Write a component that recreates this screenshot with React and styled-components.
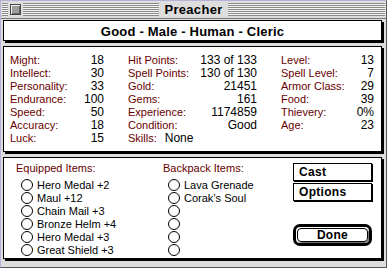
import React from 'react'
import styled, {createGlobalStyle} from 'styled-components'

const stats = [
    [
        ['Might:', '18'],
        ['Intellect:', '30'],
        ['Personality:', '33'],
        ['Endurance:', '100'],
        ['Speed:', '50'],
        ['Accuracy:', '18'],
        ['Luck:', '15'],
    ],
    [
        ['Hit Points:', '133 of 133'],
        ['Spell Points:', '130 of 130'],
        ['Gold:', '21451'],
        ['Gems:', '161'],
        ['Experience:', '1174859'],
        ['Condition:', 'Good'],
    ],
    [
        ['Level:', '13'],
        ['Spell Level:', '7'],
        ['Armor Class:', '29'],
        ['Food:', '39'],
        ['Thievery:', '0%'],
        ['Age:', '23'],
    ],
]

const equipped = ['Hero Medal +2', 'Maul +12', 'Chain Mail +3', 'Bronze Helm +4', 'Hero Medal +3', 'Great Shield +3']
const backpack = ['Lava Grenade', 'Corak\u2019s Soul', '', '', '', '']

const App = ()=>{
    return (
        <>
            <Global />
            <Window>
                <TitleBar>
                    <TitleSide>
                        <Stripes $w="6px" />
                        <CloseBox />
                        <Stripes />
                    </TitleSide>
                    <Title>Preacher</Title>
                    <TitleSide>
                        <Stripes />
                    </TitleSide>
                </TitleBar>
                <Content>
                    <HeaderPanel>Good - Male - Human - Cleric</HeaderPanel>
                    <StatsPanel>
                        {stats.map((col, i) => (
                            <StatColumn key={i}>
                                {col.map(([label, value]) => (
                                    <StatRow key={label}>
                                        <Label>{label}</Label>
                                        <Value>{value}</Value>
                                    </StatRow>
                                ))}
                                {i === 1 && (
                                    <SkillsRow>
                                        <Label>Skills:</Label>
                                        <Value>None</Value>
                                    </SkillsRow>
                                )}
                            </StatColumn>
                        ))}
                    </StatsPanel>
                    <ItemsPanel>
                        <ItemColumn>
                            <Label>Equipped Items:</Label>
                            <ItemList>
                                {equipped.map((it, i) => (
                                    <Item key={i}><Radio />{it}</Item>
                                ))}
                            </ItemList>
                        </ItemColumn>
                        <ItemColumn>
                            <Label>Backpack Items:</Label>
                            <ItemList>
                                {backpack.map((it, i) => (
                                    <Item key={i}><Radio />{it}</Item>
                                ))}
                            </ItemList>
                        </ItemColumn>
                        <Buttons>
                            <Button>Cast</Button>
                            <Button>Options</Button>
                            <DefaultRing>
                                <DoneButton>Done</DoneButton>
                            </DefaultRing>
                        </Buttons>
                    </ItemsPanel>
                </Content>
            </Window>
        </>
    )
}

const Global = createGlobalStyle`
    body {
        margin: 0;
        background: #dddddd;
        font-family: "Liberation Sans", Arial, sans-serif;
    }
`

const Window = styled.div`
    width: 387px;
    height: 268px;
    box-sizing: border-box;
    background: #dddddd;
    border: 1px solid #555;
    border-top-color: #b4b4d8;
    border-left-color: #b4b4d8;
    display: flex;
    flex-direction: column;
`

const TitleBar = styled.div`
    height: 17px;
    border-bottom: 1px solid #777;
    display: grid;
    grid-template-columns: 1fr auto 1fr;
    align-items: center;
    padding: 0 1px 0 1px;
`

const TitleSide = styled.div`
    display: flex;
    align-items: center;
    gap: 2px;
`

const Stripes = styled.div`
    flex: ${p => p.$w ? 'none' : '1'};
    width: ${p => p.$w || 'auto'};
    height: 13px;
    background: repeating-linear-gradient(to bottom, #8a8a8a 0 1px, #f4f4f4 1px 2px);
`

const CloseBox = styled.div`
    width: 11px;
    height: 11px;
    box-sizing: border-box;
    border: 1px solid #444;
    background: #9c9c9c;
    box-shadow: inset 1px 1px 0 #eee, inset -1px -1px 0 #666;
`

const Title = styled.div`
    padding: 0 5px;
    font-weight: bold;
    font-size: 13px;
    letter-spacing: 0.3px;
    color: #000;
`

const Content = styled.div`
    padding: 1px 0 0 2px;
    display: flex;
    flex-direction: column;
    gap: 5px;
`

const Panel = styled.div`
    width: 379px;
    box-sizing: border-box;
    background: #fff;
    border: 1px solid #000;
    box-shadow: 2px 2px 0 #000;
`

const HeaderPanel = styled(Panel)`
    height: 21px;
    padding-top: 2px;
    line-height: 17px;
    text-align: center;
    font-weight: bold;
    font-size: 13px;
    letter-spacing: 0.2px;
`

const StatsPanel = styled(Panel)`
    height: 106px;
    margin-top: 0;
    padding: 7px 0 0 6px;
    display: grid;
    grid-template-columns: 94px 129px 93px;
    column-gap: 24px;
    align-items: start;
`

const StatColumn = styled.div`
    display: flex;
    flex-direction: column;
`

const StatRow = styled.div`
    display: flex;
    justify-content: space-between;
    align-items: baseline;
    height: 13px;
    line-height: 13px;
`

const SkillsRow = styled(StatRow)`
    justify-content: flex-start;
    gap: 8px;
`

const Label = styled.span`
    font-size: 11px;
    line-height: 13px;
    color: #680000;
`

const Value = styled.span`
    font-size: 12px;
    color: #000;
`

const ItemsPanel = styled(Panel)`
    height: 102px;
    padding: 4px 0 0 12px;
    display: grid;
    grid-template-columns: 147px 130px 79px;
    align-items: start;
`

const ItemColumn = styled.div`
    display: flex;
    flex-direction: column;
`

const ItemList = styled.div`
    display: flex;
    flex-direction: column;
    margin-top: 3px;
    padding-left: 5px;
`

const Item = styled.div`
    display: flex;
    align-items: center;
    gap: 4px;
    height: 13px;
    font-size: 11px;
    color: #000;
`

const Radio = styled.span`
    width: 12px;
    height: 12px;
    box-sizing: border-box;
    border: 1px solid #000;
    border-radius: 50%;
    background: #fff;
    flex: none;
`

const Buttons = styled.div`
    display: flex;
    flex-direction: column;
    padding-top: 1px;
`

const Button = styled.div`
    height: 18px;
    box-sizing: border-box;
    border: 1px solid #000;
    box-shadow: 1px 1px 0 #000;
    margin-bottom: 2px;
    padding-left: 5px;
    line-height: 16px;
    font-weight: bold;
    font-size: 12px;
    letter-spacing: 0.3px;
`

const DefaultRing = styled.div`
    margin-top: 21px;
    height: 22px;
    box-sizing: border-box;
    border: 3px solid #000;
    border-radius: 7px;
    padding: 1px;
    display: flex;
`

const DoneButton = styled.div`
    flex: 1;
    box-sizing: border-box;
    border: 1px solid #000;
    border-radius: 4px;
    box-shadow: 1px 1px 0 #777;
    text-align: center;
    line-height: 12px;
    font-weight: bold;
    font-size: 12px;
    letter-spacing: 0.3px;
`

export default App
